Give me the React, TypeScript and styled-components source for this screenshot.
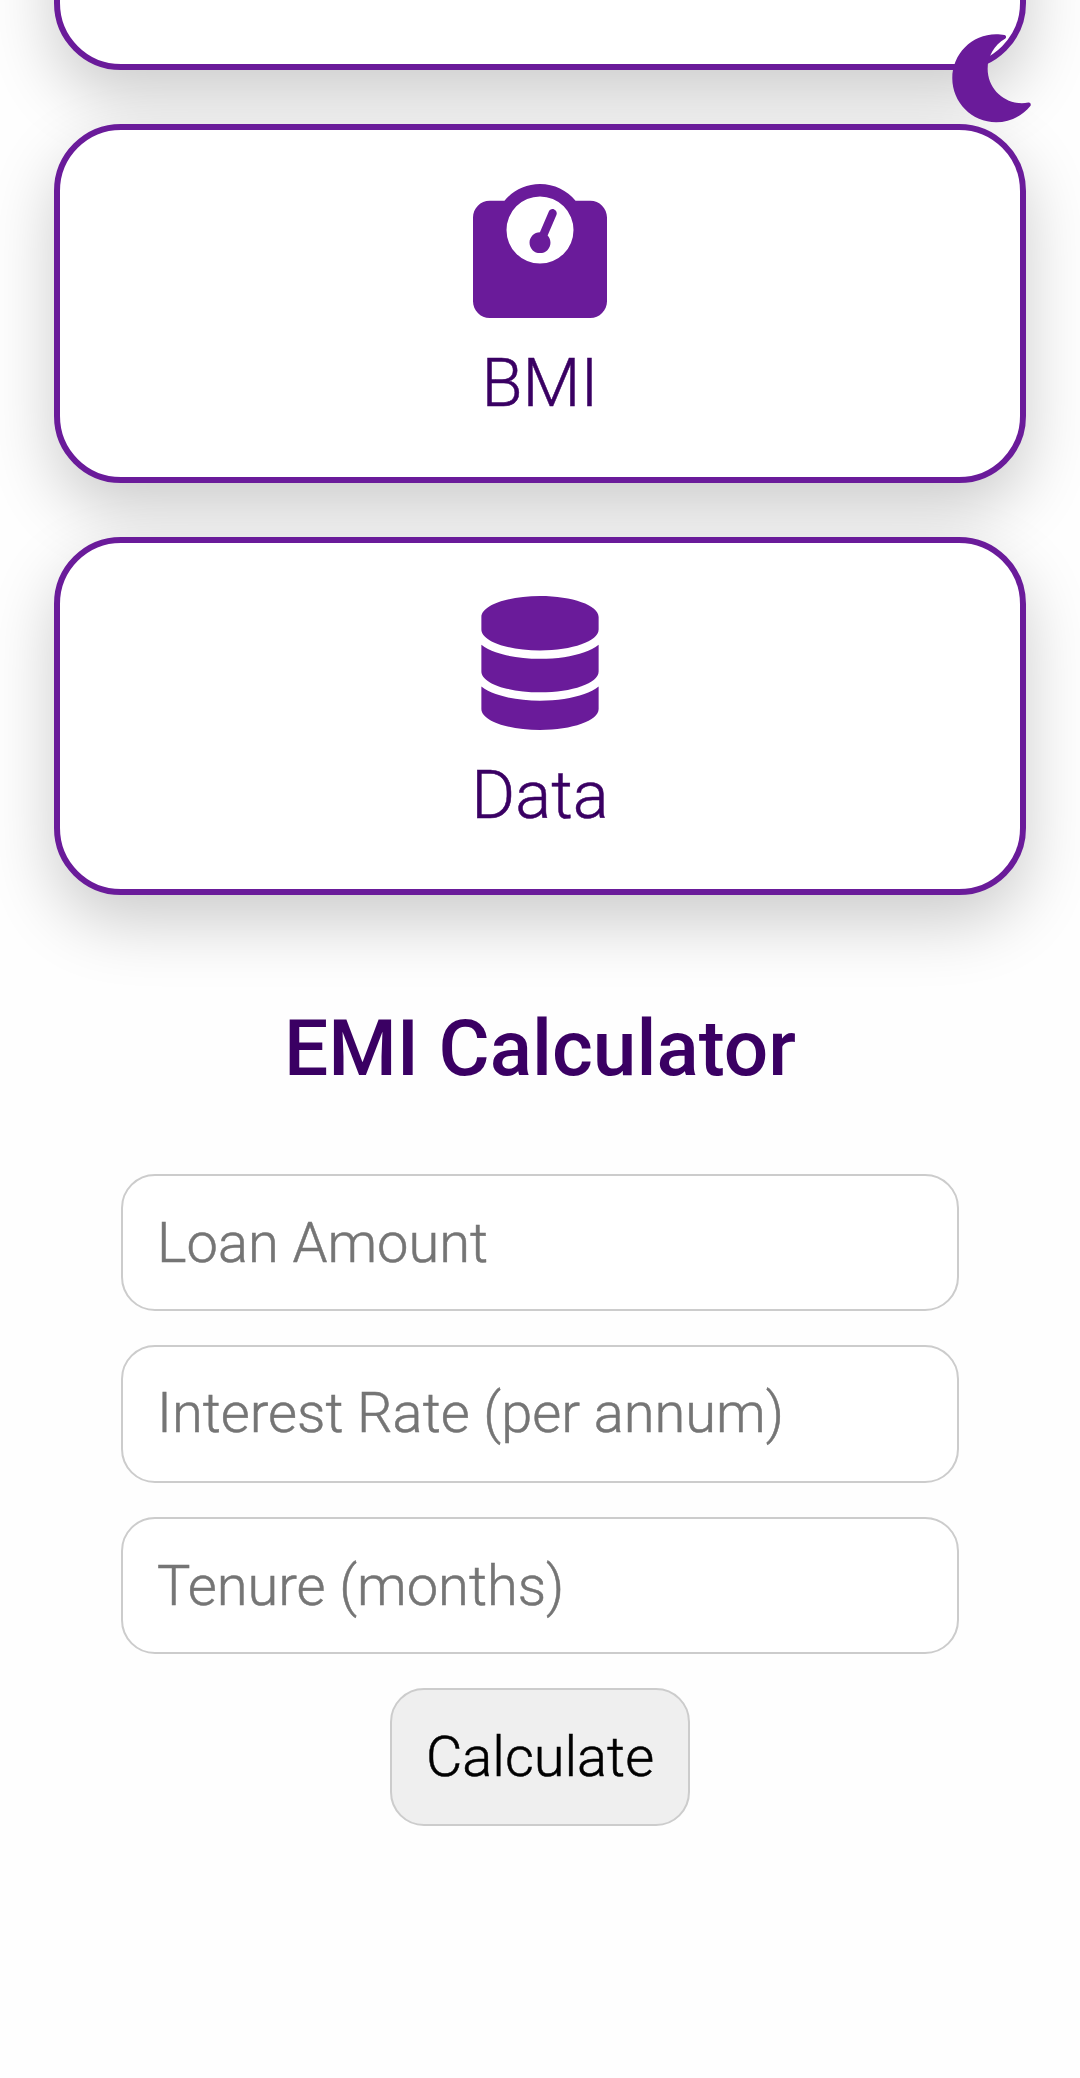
import React from "react";
import styled, { createGlobalStyle } from "styled-components";
import { FaDatabase, FaWeightScale } from "react-icons/fa6";

const purple = "#6a1b9a";
const ink = "#3a0063";

const GlobalStyle = createGlobalStyle`
  * { box-sizing: border-box; }
  body {
    margin: 0;
    background: #fefefe;
    font-family: Roboto, "Liberation Sans", sans-serif;
    font-weight: 300;
  }
`;

const Page = styled.main`
  position: relative;
  height: 2078px;
  overflow: hidden;
`;

const CardList = styled.section`
  display: flex;
  flex-direction: column;
  gap: 54px;
  margin-top: -288px;
  padding: 0 54px;
`;

const Card = styled.article`
  display: flex;
  flex-direction: column;
  align-items: center;
  height: 358.4px;
  padding-top: 53.6px;
  border: 6px solid ${purple};
  border-radius: 67px;
  background: #fff;
  box-shadow: 0 27px 67px rgba(0, 0, 0, 0.2);
  color: ${purple};
  font-size: 134px;

  svg { display: block; flex: none; }
`;

const CardLabel = styled.span`
  margin-top: 26px;
  color: ${ink};
  font-size: 67px;
  line-height: 79px;
  -webkit-text-stroke: 0.5px currentColor;
`;

const ThemeToggle = styled.button`
  position: absolute;
  top: 28px;
  right: 33.5px;
  width: 100.5px;
  height: 100.5px;
  padding: 0;
  border: 0;
  background: none;
  color: ${purple};

  svg { display: block; width: 100%; height: 100%; }
`;

const Form = styled.form`
  display: flex;
  flex-direction: column;
  align-items: center;
  gap: 34px;
  padding: 0 121px;
`;

const Title = styled.h2`
  margin: 105.8px 0 45.1px;
  color: ${ink};
  font-size: 78.4px;
  font-weight: 500;
  line-height: 94px;
  white-space: nowrap;
`;

const Field = styled.input`
  width: 100%;
  height: 137.4px;
  padding: 0 34px;
  border: 2px solid #ccc;
  border-radius: 34px;
  background: #fff;
  font: 300 56px Roboto, "Liberation Sans", sans-serif;
  -webkit-text-stroke: 0.5px currentColor;

  &:first-of-type { padding-top: 1px; }
  &:nth-of-type(2) { padding-bottom: 2px; }
  &::placeholder { color: #757575; opacity: 1; }
`;

const Submit = styled.button`
  width: 300px;
  height: 138px;
  padding: 0 0 1px;
  border: 2px solid #ccc;
  border-radius: 34px;
  background: #efefef;
  color: #000;
  font: 300 56px Roboto, "Liberation Sans", sans-serif;
  -webkit-text-stroke: 0.5px currentColor;
`;

const Moon = () => (
  <svg viewBox="0 0 512 512" fill="currentColor" aria-hidden="true">
    <path d="M421.6 379.9c-.6641 0-1.35 .0625-2.049 .1953c-11.24 2.143-22.37 3.17-33.32 3.17c-94.81 0-174.1-77.14-174.1-175.5c0-63.19 33.79-121.3 88.73-152.6c8.467-4.812 6.339-17.66-3.279-19.44c-11.2-2.078-29.53-3.746-40.9-3.746C132.3 31.1 32 132.2 32 256c0 123.6 100.1 224 223.8 224c69.04 0 132.1-31.45 173.8-82.93C435.3 389.1 429.1 379.9 421.6 379.9z" />
  </svg>
);

const fields = ["Loan Amount", "Interest Rate (per annum)", "Tenure (months)"];

export default function App() {
  return (
    <>
      <GlobalStyle />
      <Page>
        <CardList>
          <Card />
          <Card>
            <FaWeightScale />
            <CardLabel>BMI</CardLabel>
          </Card>
          <Card>
            <FaDatabase />
            <CardLabel>Data</CardLabel>
          </Card>
        </CardList>
        <Form onSubmit={(e) => e.preventDefault()}>
          <Title>EMI Calculator</Title>
          {fields.map((label) => (
            <Field key={label} placeholder={label} />
          ))}
          <Submit>Calculate</Submit>
        </Form>
        <ThemeToggle type="button">
          <Moon />
        </ThemeToggle>
      </Page>
    </>
  );
}
